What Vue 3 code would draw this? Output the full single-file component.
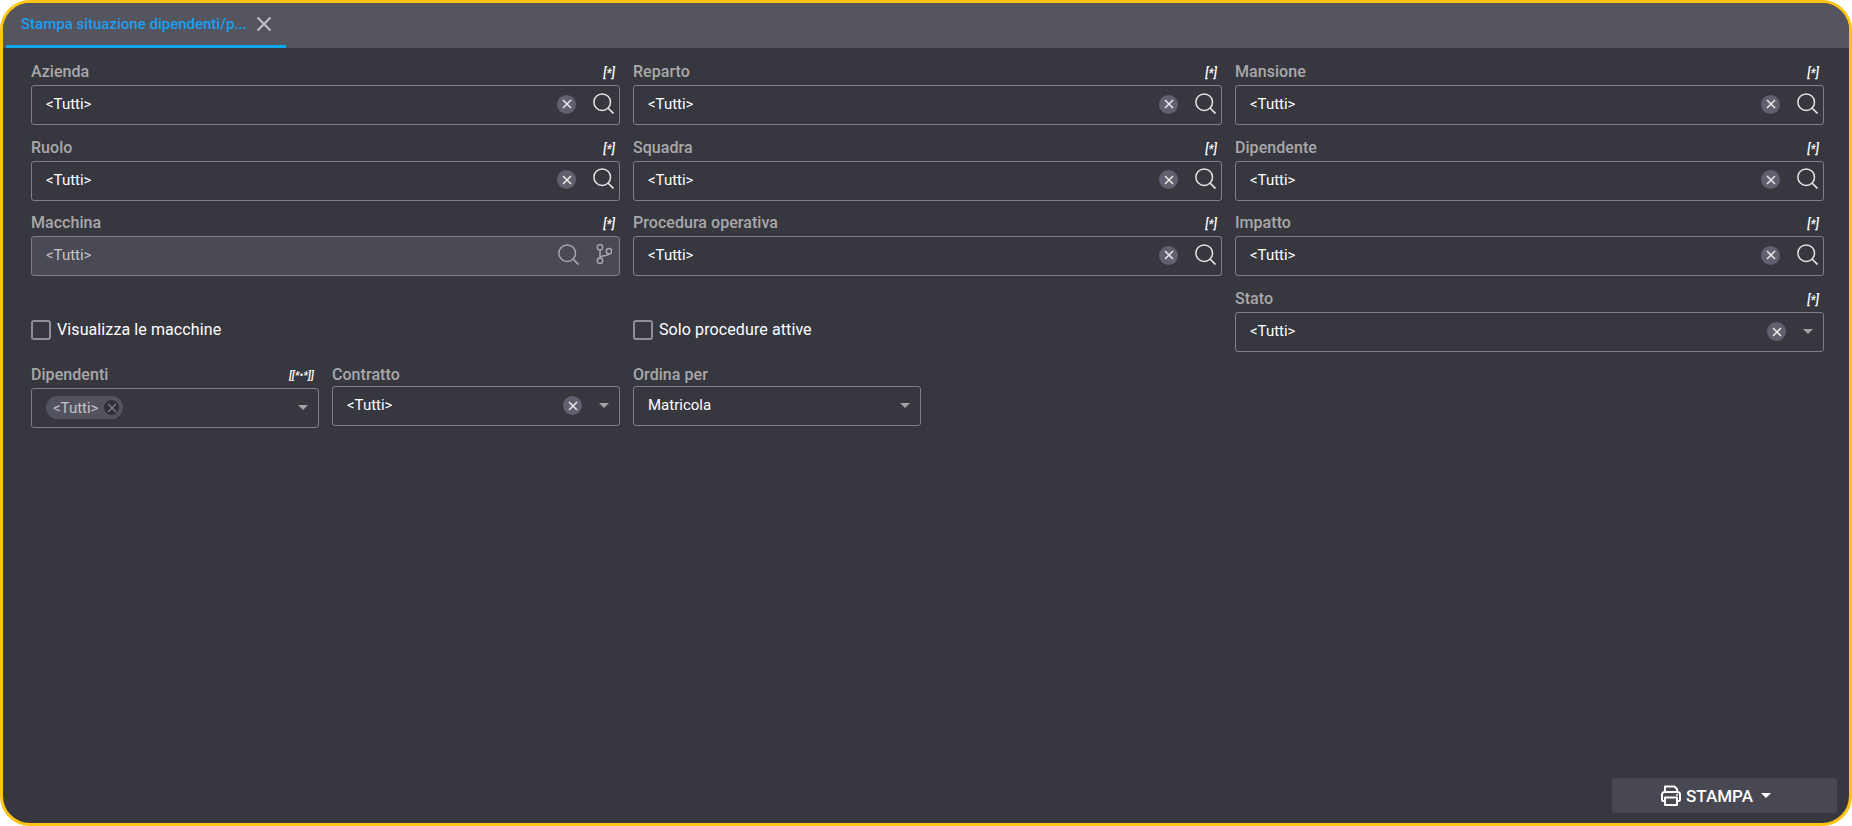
<template>
  <div class="window">
    <div class="tabbar">
      <div class="tab">
        <span class="tab-title">Stampa situazione dipendenti/p...</span>
        <svg class="tab-close" width="16" height="16" viewBox="0 0 16 16">
          <path d="M1.5 1.5 14.5 14.5M14.5 1.5 1.5 14.5" stroke="currentColor" stroke-width="2" fill="none" />
        </svg>
      </div>
    </div>

    <div class="content">
      <div class="form">
        <div v-for="f in lookups" :key="f.label" class="field span2">
          <div class="field-label">
            <span>{{ f.label }}</span>
            <i class="tag">[*]</i>
          </div>
          <div class="box" :class="{ disabled: f.disabled }">
            <span class="value">&lt;Tutti&gt;</span>
            <template v-if="f.disabled">
              <svg class="search search-disabled" width="21" height="21" viewBox="0 0 21 21">
                <circle cx="9.2" cy="9.2" r="8.3" stroke="currentColor" stroke-width="1.5" fill="none" />
                <path d="M15 15 20.5 20.5" stroke="currentColor" stroke-width="1.7" fill="none" />
              </svg>
              <svg class="branch" width="16" height="20" viewBox="0 0 16 20">
                <g stroke="currentColor" stroke-width="1.5" fill="none">
                  <circle cx="4" cy="3.2" r="2.7" />
                  <circle cx="4" cy="16.8" r="2.7" />
                  <circle cx="13" cy="7.2" r="2.7" />
                  <path d="M4 5.9V14.1M4 13.5C4.5 11 12.5 12.5 13 9.9" />
                </g>
              </svg>
            </template>
            <template v-else>
              <span class="clear clear-lookup">
                <svg width="10" height="10" viewBox="0 0 10 10">
                  <path d="M1 1 9 9M9 1 1 9" stroke="currentColor" stroke-width="1.6" fill="none" />
                </svg>
              </span>
              <svg class="search" width="21" height="21" viewBox="0 0 21 21">
                <circle cx="9.2" cy="9.2" r="8.3" stroke="currentColor" stroke-width="1.5" fill="none" />
                <path d="M15 15 20.5 20.5" stroke="currentColor" stroke-width="1.7" fill="none" />
              </svg>
            </template>
          </div>
        </div>

        <label class="check span2">
          <span class="checkbox"></span>
          <span>Visualizza le macchine</span>
        </label>
        <label class="check span2">
          <span class="checkbox"></span>
          <span>Solo procedure attive</span>
        </label>
        <div class="field span2">
          <div class="field-label">
            <span>Stato</span>
            <i class="tag">[*]</i>
          </div>
          <div class="box">
            <span class="value">&lt;Tutti&gt;</span>
            <span class="clear">
              <svg width="10" height="10" viewBox="0 0 10 10">
                <path d="M1 1 9 9M9 1 1 9" stroke="currentColor" stroke-width="1.6" fill="none" />
              </svg>
            </span>
            <span class="caret"></span>
          </div>
        </div>

        <div class="field">
          <div class="field-label">
            <span>Dipendenti</span>
            <i class="tag tag-multi">[[*•*]]</i>
          </div>
          <div class="box">
            <span class="chip">
              &lt;Tutti&gt;
              <span class="chip-x">
                <svg width="10" height="10" viewBox="0 0 10 10">
                  <path d="M1 1 9 9M9 1 1 9" stroke="currentColor" stroke-width="1.2" fill="none" />
                </svg>
              </span>
            </span>
            <span class="spacer"></span>
            <span class="caret"></span>
          </div>
        </div>
        <div class="field compact">
          <div class="field-label">
            <span>Contratto</span>
          </div>
          <div class="box">
            <span class="value">&lt;Tutti&gt;</span>
            <span class="clear">
              <svg width="10" height="10" viewBox="0 0 10 10">
                <path d="M1 1 9 9M9 1 1 9" stroke="currentColor" stroke-width="1.6" fill="none" />
              </svg>
            </span>
            <span class="caret"></span>
          </div>
        </div>
        <div class="field compact">
          <div class="field-label">
            <span>Ordina per</span>
          </div>
          <div class="box">
            <span class="value">Matricola</span>
            <span class="caret"></span>
          </div>
        </div>
      </div>

      <div class="footer">
        <button class="print-btn">
          <svg width="20" height="21" viewBox="0 0 20 21">
            <g stroke="currentColor" stroke-width="2" fill="none" stroke-linejoin="round">
              <path d="M4 7V1.5h9.5L16 4v3" />
              <path d="M4 16H2.5A1.5 1.5 0 0 1 1 14.5V9.5A2.5 2.5 0 0 1 3.5 7h13A2.5 2.5 0 0 1 19 9.5v5a1.5 1.5 0 0 1-1.5 1.5H16" />
              <path d="M4 12.5h12v7.5H4z" />
            </g>
            <circle cx="16" cy="10" r="1" fill="currentColor" />
          </svg>
          <span>STAMPA</span>
          <span class="btn-caret"></span>
        </button>
      </div>
    </div>
  </div>
</template>

<script setup>
const lookups = [
  { label: "Azienda" },
  { label: "Reparto" },
  { label: "Mansione" },
  { label: "Ruolo" },
  { label: "Squadra" },
  { label: "Dipendente" },
  { label: "Macchina", disabled: true },
  { label: "Procedura operativa" },
  { label: "Impatto" },
];
</script>

<style>
html,
body {
  margin: 0;
  background: #fff;
}
</style>

<style scoped>
.window {
  width: 1852px;
  height: 826px;
  box-sizing: border-box;
  border: 3px solid #fdc414;
  border-radius: 30px;
  background: #373740;
  overflow: hidden;
  display: flex;
  flex-direction: column;
  font-family: Roboto, sans-serif;
  font-size: 15px;
  color: #fff;
}
.tabbar {
  height: 45px;
  flex: none;
  background: #555560;
  display: flex;
}
.tab {
  width: 280px;
  margin-left: 3px;
  box-sizing: border-box;
  padding-left: 15px;
  display: flex;
  align-items: center;
  gap: 9px;
  border-bottom: 3px solid #0ea5f0;
}
.tab-title {
  color: #1a9ff0;
  font-weight: 500;
  white-space: nowrap;
}
.tab-close {
  color: #c0c0c6;
}
.content {
  flex: 1;
  display: flex;
  flex-direction: column;
  justify-content: space-between;
  padding: 12px 12px 10px 28px;
  min-height: 0;
}
.form {
  display: grid;
  grid-template-columns: repeat(6, 288px);
  column-gap: 13px;
  row-gap: 10.67px;
}
.span2 {
  grid-column: span 2;
}
.field-label {
  height: 25px;
  display: flex;
  justify-content: space-between;
  align-items: flex-start;
  font-size: 16px;
  line-height: 23px;
  letter-spacing: 0.05px;
  font-weight: 500;
  color: #a8a8a8;
}
.compact .field-label {
  height: 23px;
}
.tag {
  font-size: 12px;
  font-weight: 500;
  line-height: 26px;
  color: #fff;
  padding-right: 5px;
}
.tag-multi {
  font-size: 11px;
}
.box {
  height: 40px;
  box-sizing: border-box;
  border: 1px solid #7f7f86;
  border-radius: 3px;
  display: flex;
  align-items: center;
  padding: 0 5px 0 14px;
}
.box.disabled {
  background: #4a4a54;
}
.box.disabled .value {
  color: #c4c4c8;
}
.value {
  flex: 1;
  white-space: nowrap;
  margin-top: -2px;
}
.clear {
  width: 19px;
  height: 19px;
  border-radius: 50%;
  background: #60606e;
  color: #e6e6e6;
  display: flex;
  align-items: center;
  justify-content: center;
  margin-right: 17px;
}
.clear-lookup {
  margin-top: -2px;
}
.search {
  color: #e4e4e4;
  margin-top: -4px;
}
.search-disabled {
  color: #a6a6aa;
  margin-right: 17px;
}
.branch {
  color: #a6a6aa;
  margin-top: -4px;
  margin-right: 2px;
}
.caret {
  width: 0;
  height: 0;
  border-left: 5px solid transparent;
  border-right: 5px solid transparent;
  border-top: 5px solid #a3a3a3;
  margin-right: 5px;
}
.spacer {
  flex: 1;
}
.chip {
  height: 23px;
  box-sizing: border-box;
  padding-left: 7px;
  padding-right: 4px;
  border-radius: 12px;
  background: #53535f;
  color: #c4c4c8;
  display: flex;
  align-items: center;
  gap: 6px;
}
.chip-x {
  width: 15px;
  height: 15px;
  border-radius: 50%;
  background: #2f2f38;
  color: #80808a;
  display: flex;
  align-items: center;
  justify-content: center;
}
.check {
  display: flex;
  align-items: center;
  align-self: end;
  gap: 6px;
  height: 40px;
  margin-bottom: 2px;
  font-size: 16px;
  letter-spacing: 0.1px;
}
.checkbox {
  width: 20px;
  height: 20px;
  box-sizing: border-box;
  border: 2px solid #8e8e94;
  border-radius: 3px;
}
.footer {
  display: flex;
  justify-content: flex-end;
}
.print-btn {
  width: 225px;
  height: 35px;
  padding: 0 17px 0 0;
  border: none;
  border-radius: 3px;
  background: #484852;
  color: #fff;
  font-family: Roboto, sans-serif;
  font-size: 17px;
  font-weight: 500;
  display: flex;
  align-items: center;
  justify-content: center;
  gap: 5px;
}
.btn-caret {
  width: 0;
  height: 0;
  margin-left: 3px;
  border-left: 5px solid transparent;
  border-right: 5px solid transparent;
  border-top: 5px solid #fff;
}
</style>
